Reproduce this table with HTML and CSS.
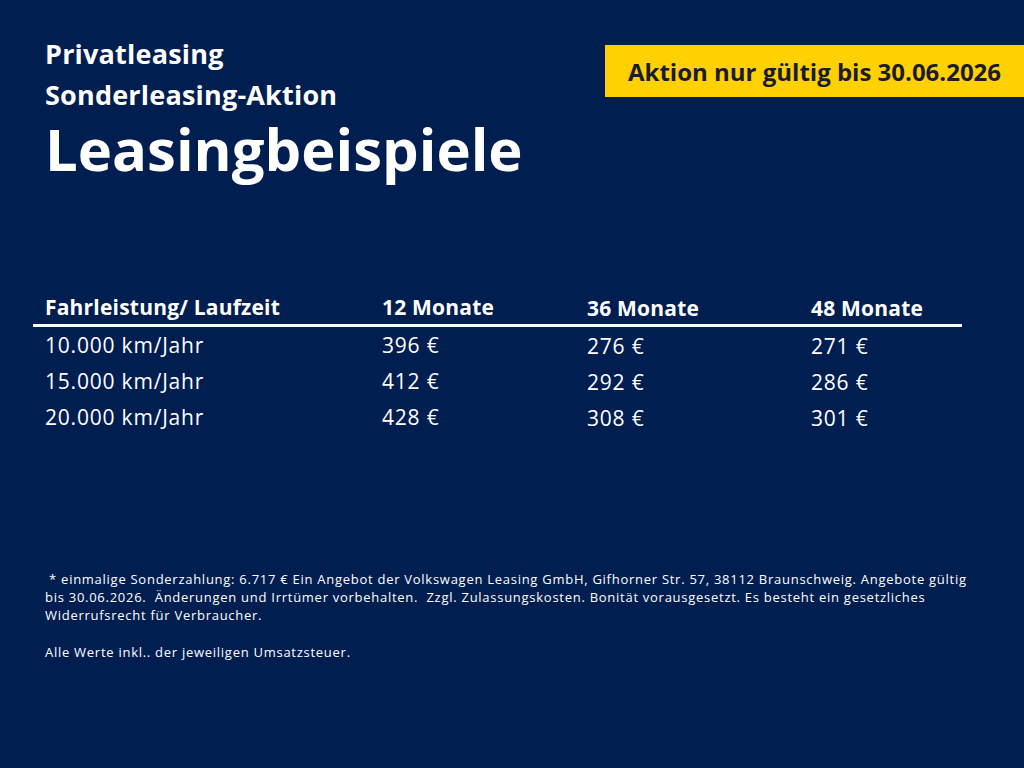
FILE: index.html
```html
<!DOCTYPE html>
<html lang="de">
<head>
<meta charset="utf-8">
<title>Leasingbeispiele</title>
<link rel="stylesheet" href="styles.css">
</head>
<body>
<main class="page">
  <header class="top">
    <div class="titles">
      <p class="kicker">Privatleasing</p>
      <p class="kicker">Sonderleasing-Aktion</p>
      <h1 class="headline">Leasingbeispiele</h1>
    </div>
    <div class="badge">Aktion nur gültig bis 30.06.2026</div>
  </header>

  <section class="table">
    <div class="row head">
      <span>Fahrleistung/ Laufzeit</span>
      <span>12 Monate</span>
      <span class="lower">36 Monate</span>
      <span class="lower">48 Monate</span>
    </div>
    <div class="row">
      <span>10.000 km/Jahr</span>
      <span>396 €</span>
      <span class="lower">276 €</span>
      <span class="lower">271 €</span>
    </div>
    <div class="row">
      <span>15.000 km/Jahr</span>
      <span>412 €</span>
      <span class="lower">292 €</span>
      <span class="lower">286 €</span>
    </div>
    <div class="row">
      <span>20.000 km/Jahr</span>
      <span>428 €</span>
      <span class="lower">308 €</span>
      <span class="lower">301 €</span>
    </div>
  </section>

  <footer class="notes">
    <p>&nbsp;* einmalige Sonderzahlung: 6.717 € Ein Angebot der Volkswagen Leasing GmbH, Gifhorner Str. 57, 38112 Braunschweig. Angebote gültig bis 30.06.2026.&nbsp; Änderungen und Irrtümer vorbehalten.&nbsp; Zzgl. Zulassungskosten. Bonität vorausgesetzt. Es besteht ein gesetzliches Widerrufsrecht für Verbraucher.</p>
    <p>Alle Werte inkl.. der jeweiligen Umsatzsteuer.</p>
  </footer>
</main>
</body>
</html>
```

FILE: styles.css
```css
* { box-sizing: border-box; }
html, body { margin: 0; padding: 0; }
body {
  background: #001e50;
  color: #ffffff;
  font-family: "Open Sans", "DejaVu Sans", sans-serif;
}
.page {
  width: 1024px;
  height: 768px;
  overflow: hidden;
  display: flex;
  flex-direction: column;
}
.top {
  display: flex;
  justify-content: space-between;
  align-items: flex-start;
  padding-left: 45px;
  padding-top: 33px;
}
.kicker {
  margin: 0;
  font-size: 27px;
  font-weight: 700;
  line-height: 41px;
  letter-spacing: 0.2px;
}
.headline {
  margin: 3px 0 0 0;
  font-size: 58px;
  font-weight: 700;
  line-height: 62px;
}
.badge {
  margin-top: 12px;
  width: 419px;
  height: 52px;
  background: #ffd100;
  color: #1b1b2a;
  font-size: 24px;
  font-weight: 700;
  display: flex;
  align-items: center;
  padding-left: 23px;
  padding-top: 1px;
}
.table {
  margin-top: 112px;
  margin-left: 33px;
  width: 929px;
}
.row {
  display: grid;
  grid-template-columns: 337px 205px 224px 1fr;
  padding-left: 12px;
  font-size: 21px;
  letter-spacing: 0.8px;
  line-height: 36px;
  height: 36px;
}
.row.head {
  font-weight: 700;
  letter-spacing: 0.2px;
  height: 35px;
  line-height: 30px;
  border-bottom: 3px solid #ffffff;
}
.row .lower { position: relative; top: 1px; }
.notes {
  margin-top: 135px;
  padding-left: 45px;
  padding-right: 40px;
  font-size: 13px;
  letter-spacing: 0.73px;
  line-height: 18px;
}
.notes p { margin: 0 0 19px 0; }
```
